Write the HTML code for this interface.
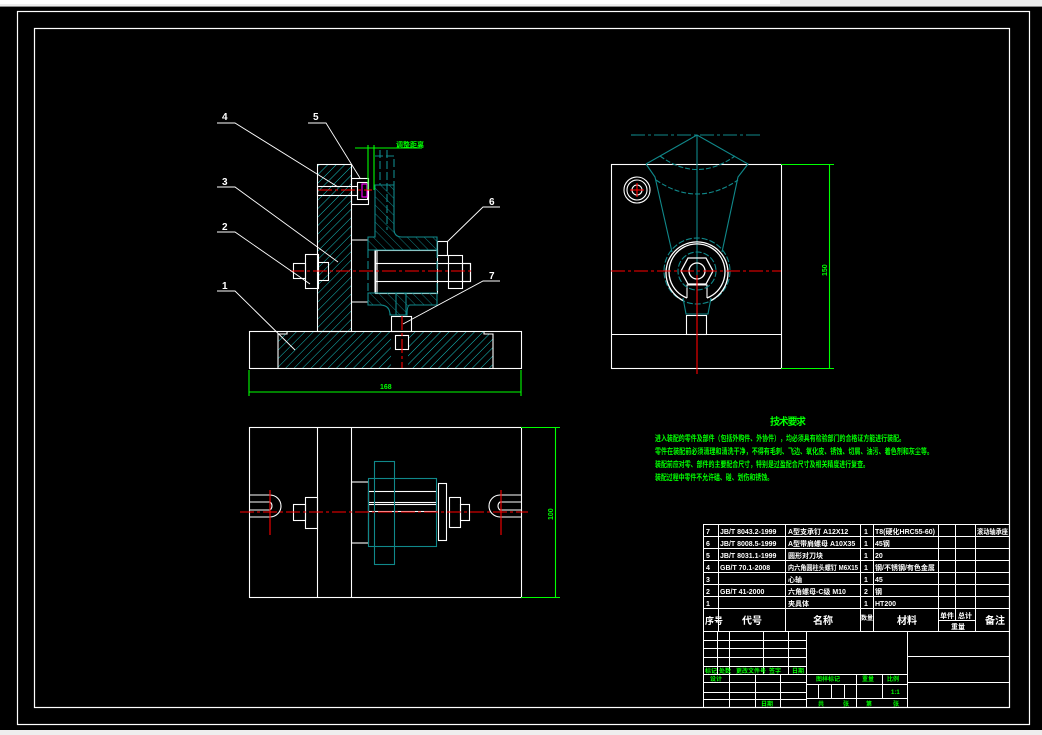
<!DOCTYPE html>
<html><head><meta charset="utf-8"><style>
html,body{margin:0;padding:0;background:#000;width:1042px;height:735px;overflow:hidden}
svg{display:block}
text{font-family:"Liberation Sans","Noto Sans CJK SC",sans-serif;font-weight:bold}
</style></head><body>
<svg width="1042" height="735" viewBox="0 0 1042 735" xmlns="http://www.w3.org/2000/svg">
<defs>
<pattern id="hc" width="6" height="6" patternUnits="userSpaceOnUse" patternTransform="rotate(45)"><line x1="0" y1="0" x2="0" y2="6" stroke="#19d7d7" stroke-width="0.9"/></pattern>
<pattern id="ht" width="6" height="6" patternUnits="userSpaceOnUse" patternTransform="rotate(-45)"><line x1="0" y1="0" x2="0" y2="6" stroke="#10888a" stroke-width="0.9"/></pattern>
</defs>
<rect width="1042" height="735" fill="#000"/>
<rect x="0" y="0" width="1042" height="7" fill="#ececec"/>
<rect x="0" y="0" width="780" height="4" fill="#fff"/>
<line x1="0" y1="6.5" x2="1042" y2="6.5" stroke="#888"/>
<rect x="0" y="730" width="1042" height="5" fill="#eee"/>
<g fill="none" stroke="#fff" stroke-width="1.2">
<rect x="17.5" y="11.5" width="1012" height="713"/>
<rect x="34.5" y="28.5" width="975" height="679"/>
</g>

<g stroke-width="1.1">
<path d="M278 334 H287 V331 H317 V164 H351 V331 H391 V368 H278 Z" fill="url(#hc)"/>
<path d="M412 331 H484 V334 H493 V368 H408 V331 Z" fill="url(#hc)"/>
<g fill="none" stroke="#fff">
<rect x="249.5" y="331.5" width="272" height="37"/>
<path d="M278 368 V334 H287 V331 M493 368 V334 H484 V331"/>
<rect x="317.5" y="164.5" width="34" height="167"/>
<line x1="351" y1="240" x2="368" y2="240"/><line x1="351" y1="302" x2="368" y2="302"/>
<rect x="317.5" y="186.5" width="40" height="9"/>
<rect x="351.5" y="178.5" width="17" height="26"/>
<rect x="357.5" y="182.5" width="10" height="17"/>
<rect x="305.5" y="254.5" width="13" height="34"/>
<rect x="293.5" y="263.5" width="12" height="15"/>
<rect x="318.5" y="262.5" width="10" height="18"/>
<rect x="391.5" y="316.5" width="20" height="15"/>
<rect x="395.5" y="335.5" width="13" height="14"/>
<rect x="375.5" y="250.5" width="62" height="43"/>
<rect x="375.5" y="263.5" width="95" height="18"/>
<rect x="375" y="250" width="2" height="43"/>
<rect x="448.5" y="255.5" width="14" height="33"/>
<rect x="462.5" y="263.5" width="8" height="18"/>
<rect x="437.5" y="241.5" width="10" height="14"/>
</g>
<path d="M375 237 V185 H394 V229 Q394 237 402 237 H437 V250 H368 V237 Z" fill="url(#ht)" stroke="#10888a"/>
<path d="M368 293 H437 V305 H410 Q407 305 407 315 H390 Q390 305 380 305 H368 Z" fill="url(#ht)" stroke="#10888a"/>
<path d="M368 250 V293 M437 250 V293 M375 156 H394 V185 M380 150 V185 M387 150 V230" fill="none" stroke="#10888a" stroke-dasharray="8 3"/>
<rect x="396" y="293" width="10" height="22" fill="none" stroke="#10888a"/>
<rect x="362" y="184" width="5" height="13" fill="none" stroke="#f0f"/>
<g stroke="#f00" stroke-dasharray="14 3 3 3">
<line x1="290" y1="271" x2="472" y2="271"/>
<line x1="318" y1="190" x2="372" y2="190"/>
<line x1="402" y1="316" x2="402" y2="368"/>
</g>
<g stroke="#0f0" fill="none">
<line x1="249" y1="392" x2="521" y2="392"/>
<line x1="249" y1="370" x2="249" y2="396"/><line x1="521" y1="370" x2="521" y2="396"/>
<line x1="355" y1="148" x2="422" y2="148"/>
<line x1="368" y1="145" x2="368" y2="190"/><line x1="374" y1="145" x2="374" y2="190"/>
</g>
<text x="380" y="389" fill="#0f0" font-size="7">168</text>
<text x="396" y="147" fill="#0f0" font-size="7">调整距离</text>
<g stroke="#fff" fill="none" stroke-width="0.9">
<path d="M217 123 H235 L338 187"/>
<path d="M308 123 H326 L360 178"/>
<path d="M217 187 H235 L338 262"/>
<path d="M217 232 H235 L310 284"/>
<path d="M217 291 H235 L295 350"/>
<path d="M500 207 H483 L447 242"/>
<path d="M500 281 H483 L403 324"/>
</g>
<g fill="#fff" font-size="10">
<text x="222" y="120">4</text><text x="313" y="120">5</text>
<text x="222" y="185">3</text><text x="222" y="230">2</text>
<text x="222" y="289">1</text><text x="489" y="205">6</text><text x="489" y="279">7</text>
</g>
</g>

<g fill="none" stroke-width="1.1">
<rect x="611.5" y="164.5" width="170" height="204" stroke="#fff"/>
<line x1="611" y1="334.5" x2="781" y2="334.5" stroke="#fff"/>
<line x1="631" y1="135" x2="762" y2="135" stroke="#10888a" stroke-dasharray="14 3 3 3"/>
<path d="M646 164 L697 135 L748 164 L738 177 L722 252 M646 164 L655 177 L672 252" stroke="#10888a"/>
<path d="M656 180 Q697 208 738 180 M660 156 Q697 183 735 156" stroke="#10888a" stroke-dasharray="5 2"/>
<line x1="697" y1="135" x2="697" y2="314" stroke="#10888a"/>
<circle cx="637" cy="190" r="13" stroke="#fff"/><circle cx="637" cy="190" r="10" stroke="#fff"/><circle cx="637" cy="190" r="5" stroke="#fff"/>
<circle cx="697" cy="271" r="33" stroke="#10888a" stroke-dasharray="6 2"/>
<path d="M687 298 A28 28 0 1 1 707 298 M684 301 A31 31 0 1 1 710 301" stroke="#fff" stroke-width="1.3"/>
<path d="M687 298 V285 H707 V298" stroke="#fff"/>
<circle cx="697" cy="271" r="19" stroke="#10888a" stroke-dasharray="6 2"/>
<path d="M688 258 H706 L713 271 L706 284 H688 L681 271 Z" stroke="#fff" stroke-width="1.3"/>
<circle cx="697" cy="271" r="8" stroke="#fff" stroke-width="1.3"/>
<path d="M683 298 L686 314 H708 L711 298" stroke="#10888a"/>
<rect x="686.5" y="315.5" width="20" height="19" stroke="#fff"/>
<line x1="611" y1="271" x2="781" y2="271" stroke="#f00" stroke-dasharray="14 3 3 3"/>
<line x1="637" y1="183" x2="637" y2="197" stroke="#f00"/><line x1="630" y1="190" x2="644" y2="190" stroke="#f00"/>
<line x1="697" y1="275" x2="697" y2="374" stroke="#f00"/>
<g stroke="#0f0"><line x1="781" y1="164.5" x2="834" y2="164.5"/><line x1="781" y1="368.5" x2="834" y2="368.5"/><line x1="829.5" y1="164" x2="829.5" y2="368"/></g>
<text x="0" y="0" transform="translate(827 276) rotate(-90)" fill="#0f0" font-size="7" stroke="none">150</text>
</g>

<g fill="none" stroke-width="1.1">
<rect x="249.5" y="427.5" width="272" height="170" stroke="#fff"/>
<line x1="317.5" y1="427" x2="317.5" y2="597" stroke="#fff"/>
<line x1="351.5" y1="427" x2="351.5" y2="597" stroke="#fff"/>
<path d="M249 495 H270 A11 11 0 0 1 270 517 H249 M249 502 H270 A5 5 0 0 1 270 510 H249" stroke="#fff"/>
<path d="M521 495 H500 A11 11 0 0 0 500 517 H521 M521 502 H500 A5 5 0 0 0 500 510 H521" stroke="#fff"/>
<rect x="305.5" y="497.5" width="12" height="31" stroke="#fff"/><rect x="293.5" y="504.5" width="12" height="16" stroke="#fff"/>
<rect x="351.5" y="482" width="17" height="61" stroke="#fff"/>
<rect x="368.5" y="491.5" width="68" height="11" stroke="#fff"/>
<rect x="368.5" y="504.5" width="68" height="7" stroke="#fff"/>
<rect x="438.5" y="483.5" width="8" height="57" stroke="#fff"/>
<rect x="449.5" y="497.5" width="11" height="30" stroke="#fff"/><rect x="460.5" y="504.5" width="9" height="16" stroke="#fff"/>
<rect x="368.5" y="478.5" width="68" height="68" stroke="#10888a"/>
<rect x="374.5" y="461.5" width="20" height="103" stroke="#10888a"/>
<line x1="240" y1="512" x2="528" y2="512" stroke="#f00" stroke-dasharray="14 3 3 3"/>
<line x1="270" y1="490" x2="270" y2="535" stroke="#f00"/><line x1="501" y1="490" x2="501" y2="535" stroke="#f00"/>
<g stroke="#0f0"><line x1="521" y1="427.5" x2="560" y2="427.5"/><line x1="521" y1="597.5" x2="560" y2="597.5"/><line x1="555.5" y1="427" x2="555.5" y2="597"/></g>
<text x="0" y="0" transform="translate(553 520) rotate(-90)" fill="#0f0" font-size="7" stroke="none">100</text>
</g>

<g fill="#0f0" font-size="8">
<text x="770" y="425" font-size="10" textLength="36">技术要求</text>
<text x="655" y="441" textLength="250" lengthAdjust="spacingAndGlyphs">进入装配的零件及部件（包括外购件、外协件），均必须具有检验部门的合格证方能进行装配。</text>
<text x="655" y="454" textLength="278" lengthAdjust="spacingAndGlyphs">零件在装配前必须清理和清洗干净，不得有毛刺、飞边、氧化皮、锈蚀、切屑、油污、着色剂和灰尘等。</text>
<text x="655" y="467" textLength="214" lengthAdjust="spacingAndGlyphs">装配前应对零、部件的主要配合尺寸，特别是过盈配合尺寸及相关精度进行复查。</text>
<text x="655" y="480" textLength="118" lengthAdjust="spacingAndGlyphs">装配过程中零件不允许磕、碰、划伤和锈蚀。</text>
</g>

<g stroke="#fff" stroke-width="1" fill="none">
<path d="M703.5 524.5 H1009 M703.5 536.5 H1009 M703.5 548.5 H1009 M703.5 560.5 H1009 M703.5 572.5 H1009 M703.5 584.5 H1009 M703.5 596.5 H1009 M703.5 608.5 H1009 M703.5 631.5 H1009 M938 620.5 H975"/>
<path d="M703.5 524 V708 M718.5 524 V631 M785.5 524 V631 M860.5 524 V631 M873.5 524 V631 M938.5 524 V631 M955.5 524 V620 M975.5 524 V631"/>
<path d="M703 640.5 H806 M703 648.5 H806 M703 657.5 H806 M703 666.5 H806 M703 674.5 H806 M703 682.5 H806 M703 692.5 H806 M703 699.5 H806"/>
<path d="M717.5 631 V674 M729.5 631 V708 M763.5 631 V674 M788.5 631 V674 M806.5 631 V708 M755.5 674 V708 M780.5 674 V708"/>
<path d="M806 674.5 H907 M806 684.5 H907 M806 698.5 H907 M818.5 684 V698 M831.5 684 V698 M844.5 684 V698 M856.5 674 V708 M882.5 674 V698 M907.5 631 V708 M907 656.5 H1009 M907 682.5 H1009"/>
</g>
<g fill="#fff" font-size="7">
<text x="706" y="534">7</text><text x="720" y="534">JB/T 8043.2-1999</text><text x="788" y="534">A型支承钉 A12X12</text><text x="864" y="534">1</text><text x="875" y="534" textLength="60" lengthAdjust="spacingAndGlyphs">T8(硬化HRC55-60)</text><text x="977" y="534" textLength="31" lengthAdjust="spacingAndGlyphs">滚动轴承座</text>
<text x="706" y="546">6</text><text x="720" y="546">JB/T 8008.5-1999</text><text x="788" y="546">A型带肩螺母 A10X35</text><text x="864" y="546">1</text><text x="875" y="546">45钢</text>
<text x="706" y="558">5</text><text x="720" y="558">JB/T 8031.1-1999</text><text x="788" y="558">圆形对刀块</text><text x="864" y="558">1</text><text x="875" y="558">20</text>
<text x="706" y="570">4</text><text x="720" y="570">GB/T 70.1-2008</text><text x="788" y="570" textLength="70" lengthAdjust="spacingAndGlyphs">内六角圆柱头螺钉 M6X15</text><text x="864" y="570">1</text><text x="875" y="570">钢/不锈钢/有色金属</text>
<text x="706" y="582">3</text><text x="788" y="582">心轴</text><text x="864" y="582">1</text><text x="875" y="582">45</text>
<text x="706" y="594">2</text><text x="720" y="594">GB/T 41-2000</text><text x="788" y="594">六角螺母-C级 M10</text><text x="864" y="594">2</text><text x="875" y="594">钢</text>
<text x="706" y="606">1</text><text x="788" y="606">夹具体</text><text x="864" y="606">1</text><text x="875" y="606">HT200</text>
<text x="705" y="624" font-size="9">序号</text><text x="742" y="624" font-size="10">代号</text><text x="813" y="624" font-size="10">名称</text><text x="861" y="620" font-size="6">数量</text><text x="897" y="624" font-size="10">材料</text><text x="940" y="618" font-size="7">单件</text><text x="958" y="618" font-size="7">总计</text><text x="951" y="629" font-size="7">重量</text><text x="985" y="624" font-size="10">备注</text>
</g>
<g fill="#0f0" font-size="6">
<text x="705" y="673">标记</text><text x="719" y="673">处数</text><text x="736" y="673">更改文件号</text><text x="769" y="673">签字</text><text x="792" y="673">日期</text>
<text x="710" y="681">设计</text><text x="761" y="706">日期</text>
<text x="816" y="681">图样标记</text><text x="862" y="681">重量</text><text x="887" y="681">比例</text><text x="891" y="694">1:1</text>
<text x="818" y="706">共</text><text x="843" y="706">张</text><text x="866" y="706">第</text><text x="893" y="706">张</text>
</g>
</svg>
</body></html>
